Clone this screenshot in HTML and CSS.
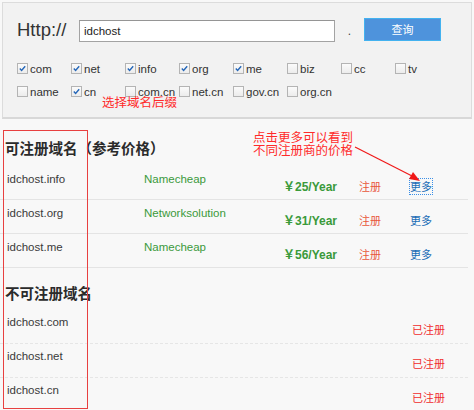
FILE: index.html
```html
<!DOCTYPE html>
<html lang="zh-CN">
<head>
<meta charset="utf-8">
<title>域名查询</title>
<link rel="stylesheet" href="styles.css">
</head>
<body>
<div class="panel">
  <div class="search-row">
    <span class="proto">Http://</span>
    <span class="input">idchost</span>
    <span class="dot">.</span>
    <span class="btn">查询</span>
  </div>
  <div class="suffixes">
    <label class="opt"><span class="cb on"><svg viewBox="0 0 11 11"><path d="M2.2 5.6 L4.4 7.8 L8.8 2.8" /></svg></span>com</label>
    <label class="opt"><span class="cb on"><svg viewBox="0 0 11 11"><path d="M2.2 5.6 L4.4 7.8 L8.8 2.8" /></svg></span>net</label>
    <label class="opt"><span class="cb on"><svg viewBox="0 0 11 11"><path d="M2.2 5.6 L4.4 7.8 L8.8 2.8" /></svg></span>info</label>
    <label class="opt"><span class="cb on"><svg viewBox="0 0 11 11"><path d="M2.2 5.6 L4.4 7.8 L8.8 2.8" /></svg></span>org</label>
    <label class="opt"><span class="cb on"><svg viewBox="0 0 11 11"><path d="M2.2 5.6 L4.4 7.8 L8.8 2.8" /></svg></span>me</label>
    <label class="opt"><span class="cb"></span>biz</label>
    <label class="opt"><span class="cb"></span>cc</label>
    <label class="opt"><span class="cb"></span>tv</label>
    <label class="opt"><span class="cb"></span>name</label>
    <label class="opt"><span class="cb on"><svg viewBox="0 0 11 11"><path d="M2.2 5.6 L4.4 7.8 L8.8 2.8" /></svg></span>cn</label>
    <label class="opt"><span class="cb"></span>com.cn</label>
    <label class="opt"><span class="cb"></span>net.cn</label>
    <label class="opt"><span class="cb"></span>gov.cn</label>
    <label class="opt"><span class="cb"></span>org.cn</label>
  </div>
</div>

<h2 class="title t1">可注册域名（参考价格）</h2>
<div class="list">
  <div class="row">
    <span class="domain">idchost.info</span>
    <span class="reg">Namecheap</span>
    <span class="price">￥25/Year</span>
    <span class="act">注册</span>
    <span class="more focus">更多</span>
  </div>
  <div class="row">
    <span class="domain">idchost.org</span>
    <span class="reg">Networksolution</span>
    <span class="price">￥31/Year</span>
    <span class="act">注册</span>
    <span class="more">更多</span>
  </div>
  <div class="row">
    <span class="domain">idchost.me</span>
    <span class="reg">Namecheap</span>
    <span class="price">￥56/Year</span>
    <span class="act">注册</span>
    <span class="more">更多</span>
  </div>
</div>

<h2 class="title t2">不可注册域名</h2>
<div class="list taken">
  <div class="row2">
    <span class="domain">idchost.com</span>
    <span class="done">已注册</span>
  </div>
  <div class="row2">
    <span class="domain">idchost.net</span>
    <span class="done">已注册</span>
  </div>
  <div class="row2 last">
    <span class="domain">idchost.cn</span>
    <span class="done">已注册</span>
  </div>
</div>

<div class="note note1">选择域名后缀</div>
<div class="note note2">点击更多可以看到<br>不同注册商的价格</div>
<svg class="arrow" viewBox="0 0 100 60" width="100" height="60">
  <line x1="15" y1="17" x2="74" y2="47" stroke="#f01818" stroke-width="1.2"/>
  <polygon points="80,51 69,49 73,42" fill="#f01818"/>
</svg>
<div class="redbox"></div>
</body>
</html>
```
FILE: styles.css
```css
* { box-sizing: border-box; }
html, body { margin: 0; padding: 0; }
body {
  width: 474px;
  height: 410px;
  overflow: hidden;
  background: #f8f8f8;
  font-family: "Liberation Sans", "Noto Sans CJK SC", sans-serif;
  color: #333;
  position: relative;
}

.panel {
  margin: 2px 2px 0 2px;
  width: 470px;
  height: 117px;
  border: 1px solid #dcdcdc;
  border-bottom: 2px solid #d8d8d8;
  background: #f2f2f2;
  padding: 15px 0 0 14px;
}

.search-row {
  display: flex;
  align-items: flex-start;
  height: 24px;
}
.proto {
  width: 62px;
  font-size: 18.5px;
  line-height: 24px;
  color: #333;
}
.input {
  margin-top: 2px;
  width: 256px;
  height: 22px;
  border: 1px solid #a3a3a3;
  border-top-color: #959595;
  background: #fff;
  font-size: 11.5px;
  line-height: 20px;
  padding-left: 4px;
  color: #222;
}
.dot {
  width: 29px;
  text-align: center;
  font-size: 12px;
  line-height: 26px;
  color: #444;
}
.btn {
  width: 77px;
  height: 23px;
  background: #4e93dc;
  border: 1px solid #43b2f0;
  color: #fff;
  font-family: "Noto Sans CJK SC", sans-serif;
  font-size: 11px;
  line-height: 21px;
  text-align: center;
}

.suffixes {
  margin-top: 15px;
  display: grid;
  grid-template-columns: repeat(8, 54px);
  grid-auto-rows: 23px;
}
.opt {
  display: flex;
  align-items: center;
  font-size: 11.5px;
  color: #333;
}
.cb {
  width: 11px;
  height: 11px;
  border: 1px solid #b4b4b4;
  background: linear-gradient(#fbfbfb, #ececec);
  margin-right: 2px;
  display: inline-flex;
}
.cb svg {
  width: 9px;
  height: 9px;
}
.cb svg path {
  fill: none;
  stroke: #2466b8;
  stroke-width: 1.7;
}

.title {
  margin: 0;
  padding-left: 5px;
  font-family: "Noto Sans CJK SC", sans-serif;
  font-size: 14.5px;
  font-weight: bold;
  line-height: 20px;
  color: #2b2b2b;
}
.t1 { margin-top: 19px; margin-bottom: 8px; }
.t2 { margin-top: 15px; margin-bottom: 7px; }

.list { width: 468px; }
.row {
  height: 34px;
  border-bottom: 1px solid #e4e4e4;
  display: grid;
  grid-template-columns: 137px 139px 76px 51px auto;
  padding-left: 7px;
  align-items: start;
}
.domain {
  padding-top: 6px;
  font-size: 11.5px;
  line-height: 14px;
  color: #3a3a3a;
}
.reg {
  padding-top: 6px;
  font-size: 11.5px;
  line-height: 14px;
  color: #3b9a3b;
}
.price {
  margin-top: 14px;
  font-size: 12px;
  font-weight: bold;
  line-height: 15px;
  color: #3a9a3a;
}
.act, .more, .done {
  margin-top: 13px;
  font-family: "Noto Sans CJK SC", sans-serif;
  font-size: 11px;
  line-height: 15px;
}
.act { color: #e8563a; }
.more { color: #1b6db6; justify-self: start; }
.focus { outline: 1px dotted #3b8fe6; }

.row2 {
  height: 34px;
  border-bottom: 1px dashed #e6e6e6;
  display: grid;
  grid-template-columns: 405px auto;
  padding-left: 7px;
  align-items: start;
}
.row2 .domain { padding-top: 5px; }
.row2 .done { margin-top: 12px; color: #f02c2c; }
.row2.last { border-bottom: none; }

.note {
  position: absolute;
  color: #ff2a2a;
  font-family: "Noto Sans CJK SC", sans-serif;
  font-size: 12.5px;
}
.note1 { left: 102px; top: 94px; line-height: 16px; }
.note2 { left: 253px; top: 130px; line-height: 13px; }

.arrow {
  position: absolute;
  left: 340px;
  top: 130px;
}

.redbox {
  position: absolute;
  left: 3px;
  top: 130px;
  width: 85px;
  height: 279px;
  border: 1px solid #e84040;
}
```
